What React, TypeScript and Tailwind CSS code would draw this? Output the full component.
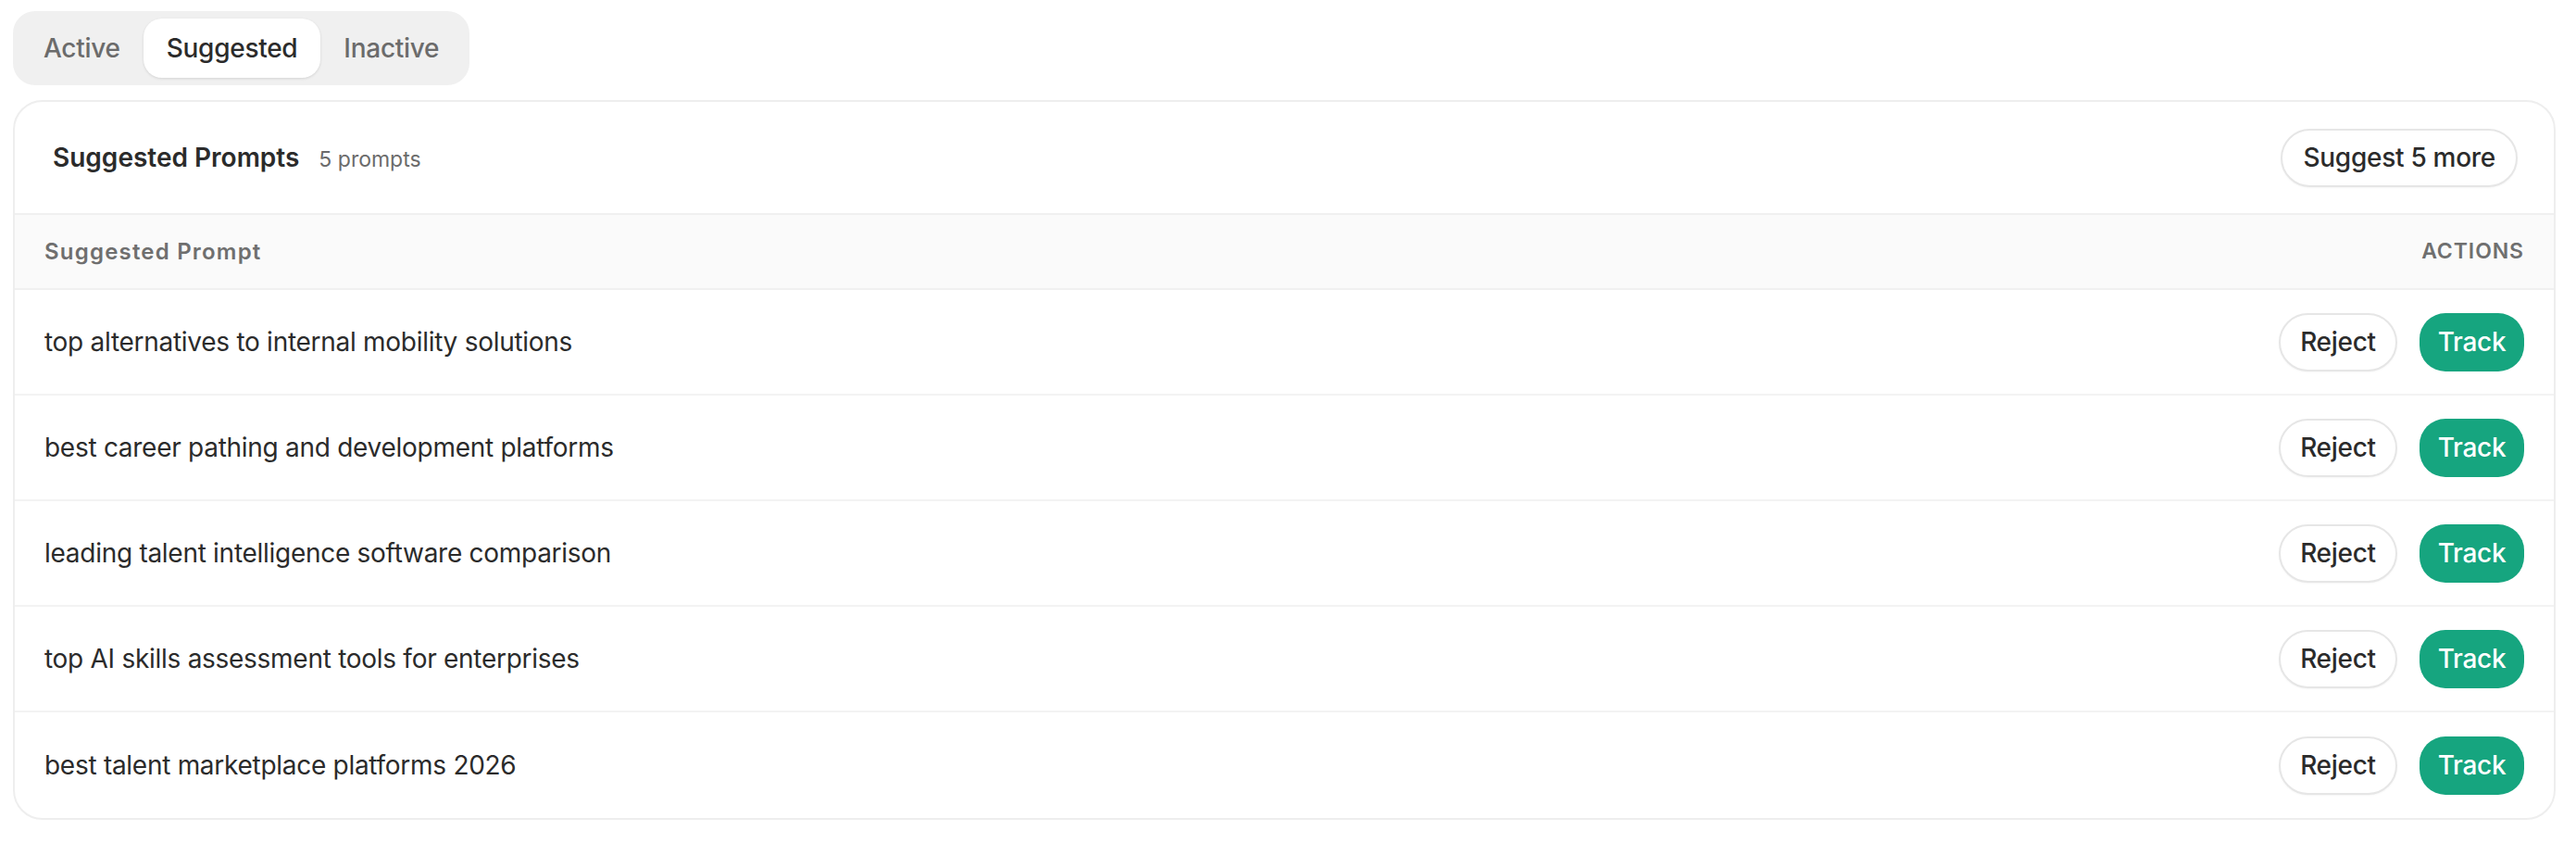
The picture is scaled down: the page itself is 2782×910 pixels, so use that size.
import { useState } from 'react'

const prompts = [
  'top alternatives to internal mobility solutions',
  'best career pathing and development platforms',
  'leading talent intelligence software comparison',
  'top AI skills assessment tools for enterprises',
  'best talent marketplace platforms 2026',
]

const tabs = ['Active', 'Suggested', 'Inactive']

export default function App() {
  const [tab, setTab] = useState('Suggested')

  return (
    <div className="min-h-screen bg-white pl-[14px] pr-[22px] pt-[12px] font-['Inter',sans-serif] text-[#2b2b2b]">
      {/* Tabs */}
      <div className="inline-flex h-[80px] items-center rounded-[24px] bg-[#f0f0f0] p-2">
        {tabs.map((t) => (
          <button
            key={t}
            onClick={() => setTab(t)}
            className={`h-16 px-[25px] rounded-[20px] text-[28px] font-medium tracking-[-0.01em] ${
              tab === t
                ? 'bg-white text-[#2b2b2b] shadow-[0_1px_3px_rgba(0,0,0,0.12)]'
                : 'text-[#6b6b6b]'
            }`}
          >
            {t}
          </button>
        ))}
      </div>

      {/* Card */}
      <div className="mt-4 overflow-hidden rounded-[32px] border-2 border-[#eeeeee] bg-white">
        <div className="flex h-[120px] items-center justify-between pl-[41px] pr-[39px]">
          <div className="flex items-baseline gap-[21px]">
            <h2 className="text-[28px] font-semibold text-[#2b2b2b]">Suggested Prompts</h2>
            <span className="text-[23px] text-[#6b6b6b]">5 prompts</span>
          </div>
          <button className="h-[63px] rounded-full border-2 border-[#e6e6e6] bg-white px-[22px] text-[28px] font-medium tracking-[-0.01em] text-[#2b2b2b] shadow-[0_1px_2px_rgba(0,0,0,0.04)]">
            Suggest 5 more
          </button>
        </div>

        {/* Table head */}
        <div className="flex h-[83px] items-center justify-between border-y-2 border-[#f0f0f0] bg-[#fafafa] px-8">
          <span className="text-[24px] font-semibold tracking-[0.05em] text-[#6f6f6f]">Suggested Prompt</span>
          <span className="text-[23px] font-semibold uppercase tracking-[0.04em] text-[#6f6f6f]">Actions</span>
        </div>

        {/* Rows */}
        {prompts.map((p, i) => (
          <div
            key={p}
            className={`flex h-[114px] items-center justify-between px-8 ${
              i < prompts.length - 1 ? 'border-b-2 border-[#f3f3f3]' : ''
            }`}
          >
            <span className="text-[28px] tracking-[-0.01em] text-[#2b2b2b]">{p}</span>
            <div className="flex items-center gap-6">
              <button className="h-[63px] w-[128px] rounded-full border-2 border-[#e6e6e6] bg-white text-[28px] font-medium tracking-[-0.01em] text-[#2b2b2b] shadow-[0_1px_2px_rgba(0,0,0,0.04)]">
                Reject
              </button>
              <button className="h-[63px] w-[113px] rounded-[28px] bg-[#16a57f] text-[28px] font-medium tracking-[-0.01em] text-white">
                Track
              </button>
            </div>
          </div>
        ))}
      </div>
    </div>
  )
}
